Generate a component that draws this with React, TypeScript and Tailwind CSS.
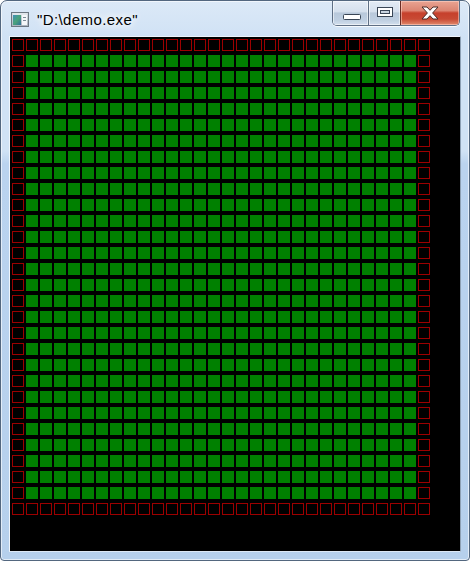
import React from "react";

const COLS = 30;
const ROWS = 30;

function Cell({ r, c }: { r: number; c: number }) {
  const edge = r === 0 || c === 0 || r === ROWS - 1 || c === COLS - 1;
  return (
    <div className="w-[14px] h-[16px]">
      {edge ? (
        <div className="w-[12px] h-[12px] border border-[#9c0000]" />
      ) : (
        <div className="w-[12px] h-[12px] bg-[#008000]" />
      )}
    </div>
  );
}

function ConsoleIcon() {
  return (
    <svg width="18" height="15" viewBox="0 0 18 15">
      <defs>
        <linearGradient id="ig" x1="0" y1="0" x2="1" y2="1">
          <stop offset="0" stopColor="#3f8fb8" />
          <stop offset="0.5" stopColor="#4aa37a" />
          <stop offset="1" stopColor="#2f6f9a" />
        </linearGradient>
        <linearGradient id="fr" x1="0" y1="0" x2="0" y2="1">
          <stop offset="0" stopColor="#d9e0e6" />
          <stop offset="1" stopColor="#a9b3bd" />
        </linearGradient>
      </defs>
      <rect x="0.5" y="0.5" width="17" height="14" fill="url(#fr)" stroke="#6c7782" />
      <rect x="2" y="3" width="8" height="10" fill="url(#ig)" />
      <rect x="11" y="3" width="5" height="10" fill="#f4f7f9" />
      <rect x="12" y="5" width="3" height="1" fill="#7b8a97" />
      <rect x="12" y="8" width="3" height="1" fill="#7b8a97" />
      <rect x="2" y="1.5" width="14" height="1" fill="#eef2f5" />
    </svg>
  );
}

function MinIcon() {
  return (
    <svg width="19" height="7" viewBox="0 0 19 7">
      <rect x="0.5" y="0.5" width="17" height="5" rx="1" fill="#ffffff" stroke="#3a4656" />
    </svg>
  );
}

function MaxIcon() {
  return (
    <svg width="17" height="10" viewBox="0 0 17 10">
      <rect x="0.5" y="0.5" width="15" height="9" fill="#ffffff" stroke="#3a4656" />
      <rect x="3.5" y="3.5" width="9" height="3" fill="#c9d4e0" stroke="#3a4656" />
    </svg>
  );
}

function CloseIcon() {
  return (
    <svg width="18" height="14" viewBox="0 0 18 14">
      <path
        d="M1 1 H6 L9 4.3 L12 1 H17 L11.6 7 L17 13 H12 L9 9.7 L6 13 H1 L6.4 7 Z"
        fill="#ffffff"
        stroke="#4a2a26"
        strokeWidth="1"
        strokeLinejoin="round"
      />
    </svg>
  );
}

export default function App() {
  const cells: React.ReactNode[] = [];
  for (let r = 0; r < ROWS; r++) {
    for (let c = 0; c < COLS; c++) {
      cells.push(<Cell key={r * COLS + c} r={r} c={c} />);
    }
  }

  return (
    <div className="w-[470px] h-[561px] bg-white">
      <div className="w-[470px] h-[561px] rounded-t-[7px] rounded-b-[4px] border border-[#53677f] overflow-hidden bg-[linear-gradient(180deg,#dce9f7_0px,#d0e2f5_36px,#d0e2f5_150px,#bad3ef_163px,#b6d0ec_100%)] flex flex-col shadow-[inset_0_0_0_1px_rgba(255,255,255,0.6)]">
        {/* title bar */}
        <div className="h-[35px] flex items-start">
          <div className="flex items-start pl-[10px] pt-[11px] gap-[8px]">
            <ConsoleIcon />
            <div
              className="-mt-[1px] text-[15px] leading-[17px] tracking-[0.4px] text-black [text-shadow:0_0_6px_#ffffff,0_0_10px_#ffffff,0_0_14px_#ffffff]"
              style={{ fontFamily: '"Liberation Sans", Arial, sans-serif' }}
            >
              "D:\demo.exe"
            </div>
          </div>
          <div className="flex-1" />
          <div className="mr-[9px] flex h-[25px] rounded-b-[5px] border border-t-0 border-[#5f6f84] overflow-hidden shadow-[0_1px_0_rgba(255,255,255,0.8)]">
            <div className="w-[35px] h-full flex items-center justify-center pt-[8px] pl-[3px] bg-[linear-gradient(180deg,#e3ebf5_0%,#d5e0ed_45%,#b8c8da_50%,#bfcfe1_80%,#d2dfed_100%)] shadow-[inset_0_0_0_1px_rgba(255,255,255,0.55)]">
              <MinIcon />
            </div>
            <div className="w-[1px] h-full bg-[#5f6f84]" />
            <div className="w-[31px] h-full flex items-center justify-center pb-[3px] pl-[2px] bg-[linear-gradient(180deg,#e3ebf5_0%,#d5e0ed_45%,#b8c8da_50%,#bfcfe1_80%,#d2dfed_100%)] shadow-[inset_0_0_0_1px_rgba(255,255,255,0.55)]">
              <MaxIcon />
            </div>
            <div className="w-[1px] h-full bg-[#6a2c24]" />
            <div className="w-[58px] h-full flex items-center justify-center pb-[1px] bg-[linear-gradient(180deg,#e9a493_0%,#dc8572_40%,#c6402c_50%,#c84a34_75%,#e18a6c_100%)] shadow-[inset_0_0_0_1px_rgba(255,220,210,0.5)]">
              <CloseIcon />
            </div>
          </div>
        </div>
        {/* client */}
        <div className="ml-[8px] w-[452px] h-[516px] border border-t-[#eef4fb] border-l-[#eef4fb] border-r-[#8da0b4] border-b-[#dde8f4]">
          <div className="w-[450px] h-[514px] bg-black pt-[2px] pl-[2px]">
            <div className="grid grid-cols-[repeat(30,14px)] grid-rows-[repeat(30,16px)]">
              {cells}
            </div>
          </div>
        </div>
      </div>
    </div>
  );
}
